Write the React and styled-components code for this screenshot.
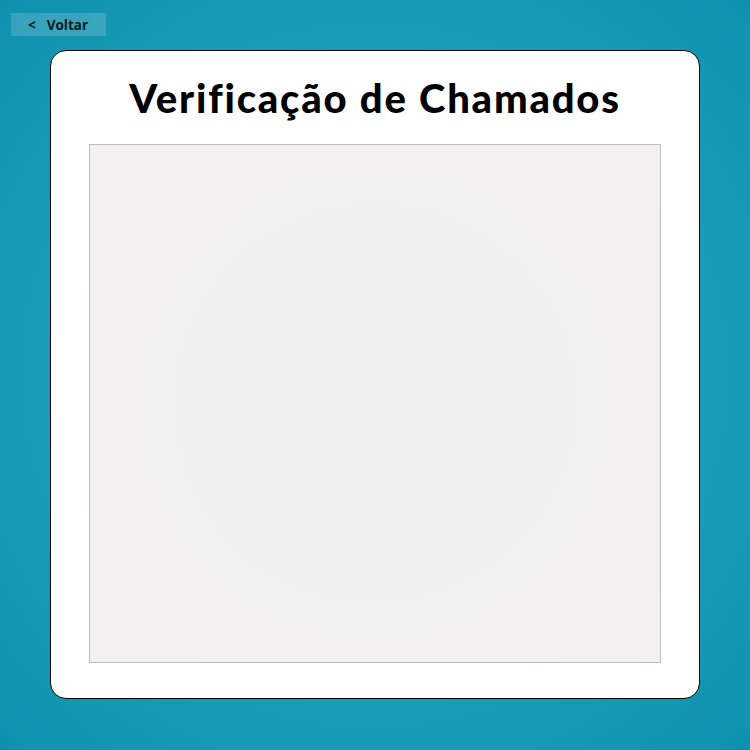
import React from 'react';
import styled, { createGlobalStyle } from 'styled-components';

const GlobalStyle = createGlobalStyle`
  html, body {
    margin: 0;
    padding: 0;
  }
  body {
    font-family: "Open Sans", "Liberation Sans", sans-serif;
  }
`;

const Page = styled.div`
  width: 750px;
  height: 750px;
  box-sizing: border-box;
  padding: 13px 0 0 0;
  background: radial-gradient(circle at 50% 50%, #27aac3 0%, #22a4be 40%, #0f90ae 100%);
  overflow: hidden;
`;

const BackButton = styled.button`
  display: flex;
  align-items: center;
  gap: 11px;
  margin-left: 11px;
  width: 95px;
  height: 23px;
  padding: 0 0 0 17px;
  box-sizing: border-box;
  border: none;
  background: rgba(255, 255, 255, 0.16);
  color: #0b1a20;
  font-family: "Open Sans", "Liberation Sans", sans-serif;
  font-weight: 700;
  font-size: 13.5px;
  cursor: pointer;
`;

const Card = styled.div`
  width: 650px;
  height: 649px;
  margin: 14px auto 0;
  box-sizing: border-box;
  background: #fff;
  border: 1px solid #000;
  border-radius: 16px;
  display: flex;
  flex-direction: column;
  align-items: center;
  padding: 0 38px 35px;
`;

const Title = styled.h1`
  margin: 0;
  height: 93px;
  display: flex;
  align-items: center;
  padding-top: 1px;
  box-sizing: border-box;
  font-family: "Lato", "Liberation Sans", sans-serif;
  font-weight: 900;
  font-size: 40px;
  letter-spacing: 1.8px;
  color: #000;
`;

const ListBox = styled.div`
  align-self: stretch;
  flex: 1;
  border: 1px solid #bdbdbd;
  background: radial-gradient(circle at 50% 50%, #efefef 0%, #f2f0f0 100%);
`;

export default function App() {
  return (
    <>
      <GlobalStyle />
      <Page>
        <BackButton>
          <span>&lt;</span>
          <span>Voltar</span>
        </BackButton>
        <Card>
          <Title>Verificação de Chamados</Title>
          <ListBox />
        </Card>
      </Page>
    </>
  );
}
